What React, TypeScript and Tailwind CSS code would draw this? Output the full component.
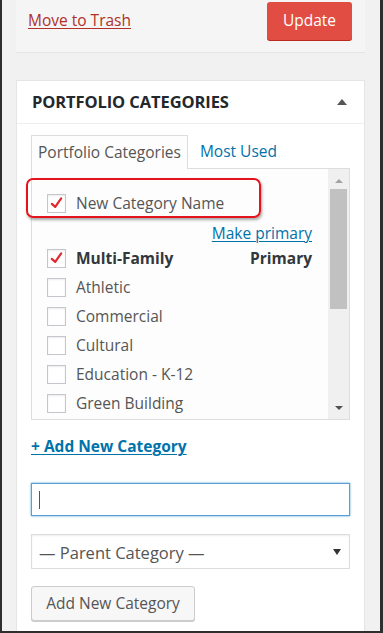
import React from 'react';

const font = { fontFamily: '"Open Sans", "Noto Sans", sans-serif' };

const Check = () => (
  <svg viewBox="0 0 20 20" className="h-[17px] w-[17px]">
    <path d="M4.5 10.5 L8.5 14 L15.5 4" fill="none" stroke="#e0282e" strokeWidth="2.6" strokeLinecap="round" strokeLinejoin="round" />
  </svg>
);

const Box: React.FC<{ checked?: boolean }> = ({ checked }) => (
  <span className="flex h-[19px] w-[19px] shrink-0 items-center justify-center border border-[#c3c7cb] bg-white shadow-[inset_0_1px_2px_rgba(0,0,0,0.08)]">
    {checked && <Check />}
  </span>
);

const Row: React.FC<{ label: string; checked?: boolean; bold?: boolean; right?: string }> = ({ label, checked, bold, right }) => (
  <div className="flex h-[29px] items-center">
    <Box checked={checked} />
    <span className={`ml-[10px] text-[15.5px] ${bold ? 'font-bold text-[#32373c]' : 'text-[#555]'}`}>{label}</span>
    {right && <span className="ml-auto text-[15.5px] font-bold text-[#32373c]">{right}</span>}
  </div>
);

export default function App() {
  const cats = ['Athletic', 'Commercial', 'Cultural', 'Education - K-12', 'Green Building'];
  return (
    <div style={font} className="h-[633px] w-[383px] overflow-hidden border-b-2 border-l-2 border-r-[3px] border-[#2e2e2e] bg-[#f1f1f1]">
      <div className="ml-[14px] w-[349px]">
        {/* publish actions */}
        <div className="flex h-[53px] items-center justify-between border-b border-[#e4e4e4] bg-[#f5f5f5] pb-[12px] pl-[12px] pr-[13px]">
          <a className="mt-[1px] text-[15.5px] text-[#b0302a] underline decoration-1 underline-offset-2">Move to Trash</a>
          <button className="mt-[2px] h-[38px] w-[85px] rounded-[3px] bg-[#e14d43] text-[15.5px] text-white shadow-[0_1px_0_#ba281e]">Update</button>
        </div>

        {/* categories box */}
        <div className="mt-[27px] h-[560px] border border-[#e5e5e5] bg-white">
          <div className="flex h-[43px] items-center justify-between border-b border-[#eee] pl-[15px] pr-[17px]">
            <h2 className="text-[16.5px] font-bold tracking-[-0.1px] text-[#23282d]">PORTFOLIO CATEGORIES</h2>
            <span className="h-0 w-0 border-x-[5px] border-b-[6px] border-x-transparent border-b-[#555]" />
          </div>

          <div className="px-[14px] pt-[11px]">
            <div className="flex h-[33px] items-end">
              <div className="relative z-10 -mb-px flex h-[34px] items-center border border-b-0 border-[#ddd] bg-[#fdfdfd] px-[6px] text-[15.5px] text-[#555]">Portfolio Categories</div>
              <div className="flex h-[33px] items-center pl-[12px] text-[15.5px] text-[#0073aa]">Most Used</div>
            </div>

            <div className="relative flex h-[252px] border border-[#ddd] bg-[#fdfdfd]">
              <div className="flex-1 pl-[15px] pr-[16px] pt-[20px]">
                <Row label="New Category Name" checked />
                <div className="flex h-[26px] items-end justify-end">
                  <a className="text-[15.5px] leading-[21px] text-[#0073aa] underline decoration-1 underline-offset-2">Make primary</a>
                </div>
                <Row label="Multi-Family" checked bold right="Primary" />
                {cats.map((c) => (
                  <Row key={c} label={c} />
                ))}
              </div>
              <div className="flex w-[21px] flex-col items-center bg-[#f0f0f0]">
                <span className="mt-[10px] h-0 w-0 border-x-[4px] border-b-[4px] border-x-transparent border-b-[#a3a3a3]" />
                <div className="mt-[6px] h-[120px] w-[17px] bg-[#c1c1c1]" />
                <span className="mb-[9px] mt-auto h-0 w-0 border-x-[4px] border-t-[4px] border-x-transparent border-t-[#505050]" />
              </div>
              {/* annotation highlight */}
              <div className="absolute left-[-6px] top-[9px] h-[40px] w-[235px] rounded-[7px] border-2 border-[#e3141b] shadow-[1px_2px_3px_rgba(0,0,0,0.35)]" />
            </div>

            <a className="mt-[15px] block w-fit text-[15.5px] font-bold text-[#0073aa] underline decoration-1 underline-offset-2">+ Add New Category</a>

            <div className="mt-[25px] flex h-[33px] items-center border border-[#5b9dd9] bg-white pl-[7px] shadow-[0_0_2px_rgba(30,140,190,0.8)]">
              <span className="h-[18px] w-px bg-[#555]" />
            </div>

            <div className="mt-[18px] flex h-[35px] items-center justify-between border border-[#ddd] bg-white pl-[7px] pr-[8px] text-[16.5px] text-[#555] shadow-[inset_0_1px_2px_rgba(0,0,0,0.07)]">
              <span className="pt-[3px]">— Parent Category —</span>
              <span className="h-0 w-0 border-x-[4px] border-t-[6px] border-x-transparent border-t-[#333]" />
            </div>

            <button className="mt-[17px] h-[35px] w-[164px] rounded-[3px] border border-[#ccc] bg-[#f7f7f7] text-[15.5px] text-[#555] shadow-[0_1px_0_#ccc]">Add New Category</button>
          </div>
        </div>
      </div>
    </div>
  );
}
